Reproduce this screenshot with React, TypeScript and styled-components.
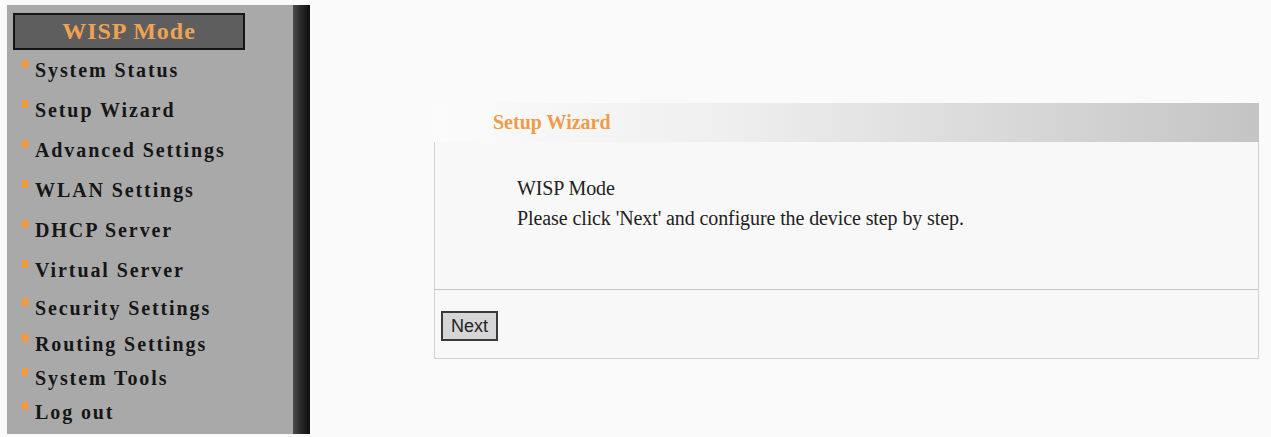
import styled, { createGlobalStyle } from 'styled-components';

const GlobalStyle = createGlobalStyle`
  body {
    margin: 0;
    background: #fafafa;
    font-family: "Liberation Serif", "Times New Roman", serif;
  }
`;

const Page = styled.div`
  display: flex;
  align-items: flex-start;
  height: 437px;
  overflow: hidden;
`;

// left menu column with the dark edge on its right
const Sidebar = styled.nav`
  margin: 5px 0 0 7px;
  width: 303px;
  height: 429px;
  display: grid;
  grid-template-columns: 1fr 17px;
  background: #a9a9a9;
`;

const SideInner = styled.div`
  padding: 8px 0 0 6px;
`;

const Shade = styled.div`
  background: linear-gradient(to right, #4c4c4c 0%, #2a2a2a 45%, #0e0e0e 100%);
`;

const ModeBox = styled.div`
  box-sizing: border-box;
  width: 232px;
  height: 37px;
  border: 2px solid #151515;
  background: #5e5e5e;
  color: #eea352;
  font-weight: bold;
  font-size: 24px;
  letter-spacing: 1px;
  line-height: 33px;
  text-align: center;
`;

const Menu = styled.ul`
  list-style: none;
  margin: 0;
  padding: 0;
`;

const MenuItem = styled.li<{ $h: number }>`
  height: ${({ $h }) => $h}px;
  display: flex;
  align-items: center;
  padding-left: 9px;
  font-weight: bold;
  font-size: 20px;
  letter-spacing: 1.9px;
  color: #161616;
  cursor: pointer;
`;

const Bullet = styled.span`
  width: 6px;
  height: 8px;
  margin: 0 7px 13px 0;
  background: #f59a3c;
  border-radius: 1px;
`;

const Main = styled.main`
  flex: 1;
  padding: 103px 0 0 124px;
`;

const Panel = styled.section`
  width: 825px;
`;

const PanelHeader = styled.div`
  height: 39px;
  display: flex;
  align-items: center;
  padding-left: 59px;
  background: linear-gradient(to right, #fbfbfb 0%, #efefef 35%, #d8d8d8 70%, #c4c4c4 100%);
  color: #ee9c48;
  font-weight: bold;
  font-size: 20px;
`;

const PanelBody = styled.div`
  box-sizing: border-box;
  height: 148px;
  padding: 31px 0 0 82px;
  border-left: 1px solid #d2d2d2;
  border-right: 1px solid #d2d2d2;
  border-bottom: 1px solid #c6c6c6;
  background: #f8f8f8;
  color: #222;
  font-size: 20px;
  letter-spacing: -0.1px;
  line-height: 30px;
`;

const PanelFooter = styled.div`
  padding: 21px 0 17px 6px;
  border: 1px solid #d2d2d2;
  border-top: none;
  background: #f8f8f8;
`;

const Button = styled.button`
  box-sizing: border-box;
  width: 57px;
  height: 30px;
  padding: 0;
  border: 2px solid #3a3a3a;
  background: #d6d6d6;
  color: #222;
  font-family: "Liberation Sans", Arial, sans-serif;
  font-size: 18px;
  cursor: pointer;
`;

const menu: { label: string; h: number }[] = [
  { label: 'System Status', h: 40 },
  { label: 'Setup Wizard', h: 40 },
  { label: 'Advanced Settings', h: 40 },
  { label: 'WLAN Settings', h: 40 },
  { label: 'DHCP Server', h: 40 },
  { label: 'Virtual Server', h: 40 },
  { label: 'Security Settings', h: 37 },
  { label: 'Routing Settings', h: 34 },
  { label: 'System Tools', h: 34 },
  { label: 'Log out', h: 34 },
];

const App = () => (
  <>
    <GlobalStyle />
    <Page>
      <Sidebar>
        <SideInner>
          <ModeBox>WISP Mode</ModeBox>
          <Menu>
            {menu.map((item) => (
              <MenuItem key={item.label} $h={item.h}>
                <Bullet />
                {item.label}
              </MenuItem>
            ))}
          </Menu>
        </SideInner>
        <Shade />
      </Sidebar>
      <Main>
        <Panel>
          <PanelHeader>Setup Wizard</PanelHeader>
          <PanelBody>
            <div>WISP Mode</div>
            <div>Please click 'Next' and configure the device step by step.</div>
          </PanelBody>
          <PanelFooter>
            <Button type="button">Next</Button>
          </PanelFooter>
        </Panel>
      </Main>
    </Page>
  </>
);

export default App;
